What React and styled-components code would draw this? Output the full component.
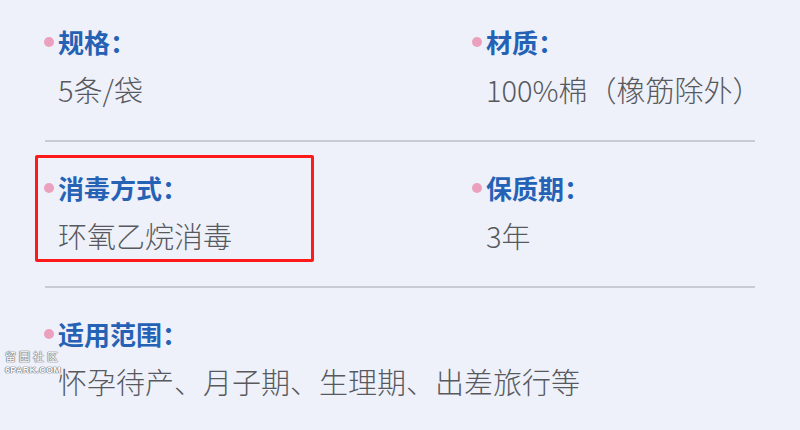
import React from "react";
import styled, { createGlobalStyle } from "styled-components";

const Global = createGlobalStyle`
  html, body { margin: 0; padding: 0; background: #eef1f9; }
  body { font-family: "Noto Sans CJK SC", "Noto Sans", sans-serif; }
`;

const Page = styled.div`
  position: relative;
  width: 800px;
  height: 430px;
  overflow: hidden;
  background: #eef1f9;
`;

const Row = styled.section`
  display: grid;
  grid-template-columns: 428px 1fr;
  padding: 31px 0 33px 44px;
  &:first-child { padding-top: 27px; }
`;

const Item = styled.div`
  position: relative;
  display: flex;
  flex-direction: column;
  gap: 14px;
  ${(p) =>
    p.$highlight &&
    `
    &::before {
      content: "";
      position: absolute;
      left: -9px;
      top: -18px;
      width: 279px;
      height: 107px;
      border: 3px solid #ff1a1a;
      border-radius: 2px;
      box-sizing: border-box;
    }
  `}
`;

const Label = styled.div`
  display: flex;
  align-items: center;
  gap: 4px;
  height: 30px;
  font-size: 26px;
  line-height: 30px;
  font-weight: 700;
  color: #2562b6;
  white-space: nowrap;
  &::before {
    content: "";
    width: 10px;
    height: 10px;
    border-radius: 50%;
    background: #eba0bd;
    flex: none;
  }
`;

const Value = styled.div`
  padding-left: 14px;
  height: 36px;
  font-size: 29px;
  line-height: 36px;
  font-weight: 300;
  color: #58595e;
  white-space: nowrap;
`;

const Divider = styled.hr`
  margin: 0 45px;
  height: 2px;
  border: 0;
  background: #c9ccd6;
`;

const Watermark = styled.div`
  position: absolute;
  left: 5px;
  top: 351px;
  display: flex;
  flex-direction: column;
  align-items: center;
  font-family: "Liberation Sans", "Noto Sans CJK SC", sans-serif;
  color: #ffffff;
  text-shadow: 0 0 1px #5e6068, 0 0 1px #5e6068, 0 0 1px #5e6068;
  line-height: 1;
`;

const WatermarkTop = styled.span`
  font-family: "Noto Sans CJK SC", sans-serif;
  font-size: 11px;
  letter-spacing: 3px;
`;

const WatermarkBottom = styled.span`
  margin-top: 4px;
  font-size: 9px;
  font-weight: 700;
  letter-spacing: 0.3px;
`;

const rows = [
  [
    { label: "规格：", value: "5条/袋" },
    { label: "材质：", value: "100%棉（橡筋除外）" },
  ],
  [
    { label: "消毒方式：", value: "环氧乙烷消毒", highlight: true },
    { label: "保质期：", value: "3年" },
  ],
  [{ label: "适用范围：", value: "怀孕待产、月子期、生理期、出差旅行等" }],
];

export default function App() {
  return (
    <Page>
      <Global />
      {rows.map((row, i) => (
        <React.Fragment key={i}>
          {i > 0 && <Divider />}
          <Row>
            {row.map((it) => (
              <Item key={it.label} $highlight={it.highlight}>
                <Label>{it.label}</Label>
                <Value>{it.value}</Value>
              </Item>
            ))}
          </Row>
        </React.Fragment>
      ))}
      <Watermark>
        <WatermarkTop>留园社区</WatermarkTop>
        <WatermarkBottom>6PARK.COM</WatermarkBottom>
      </Watermark>
    </Page>
  );
}
